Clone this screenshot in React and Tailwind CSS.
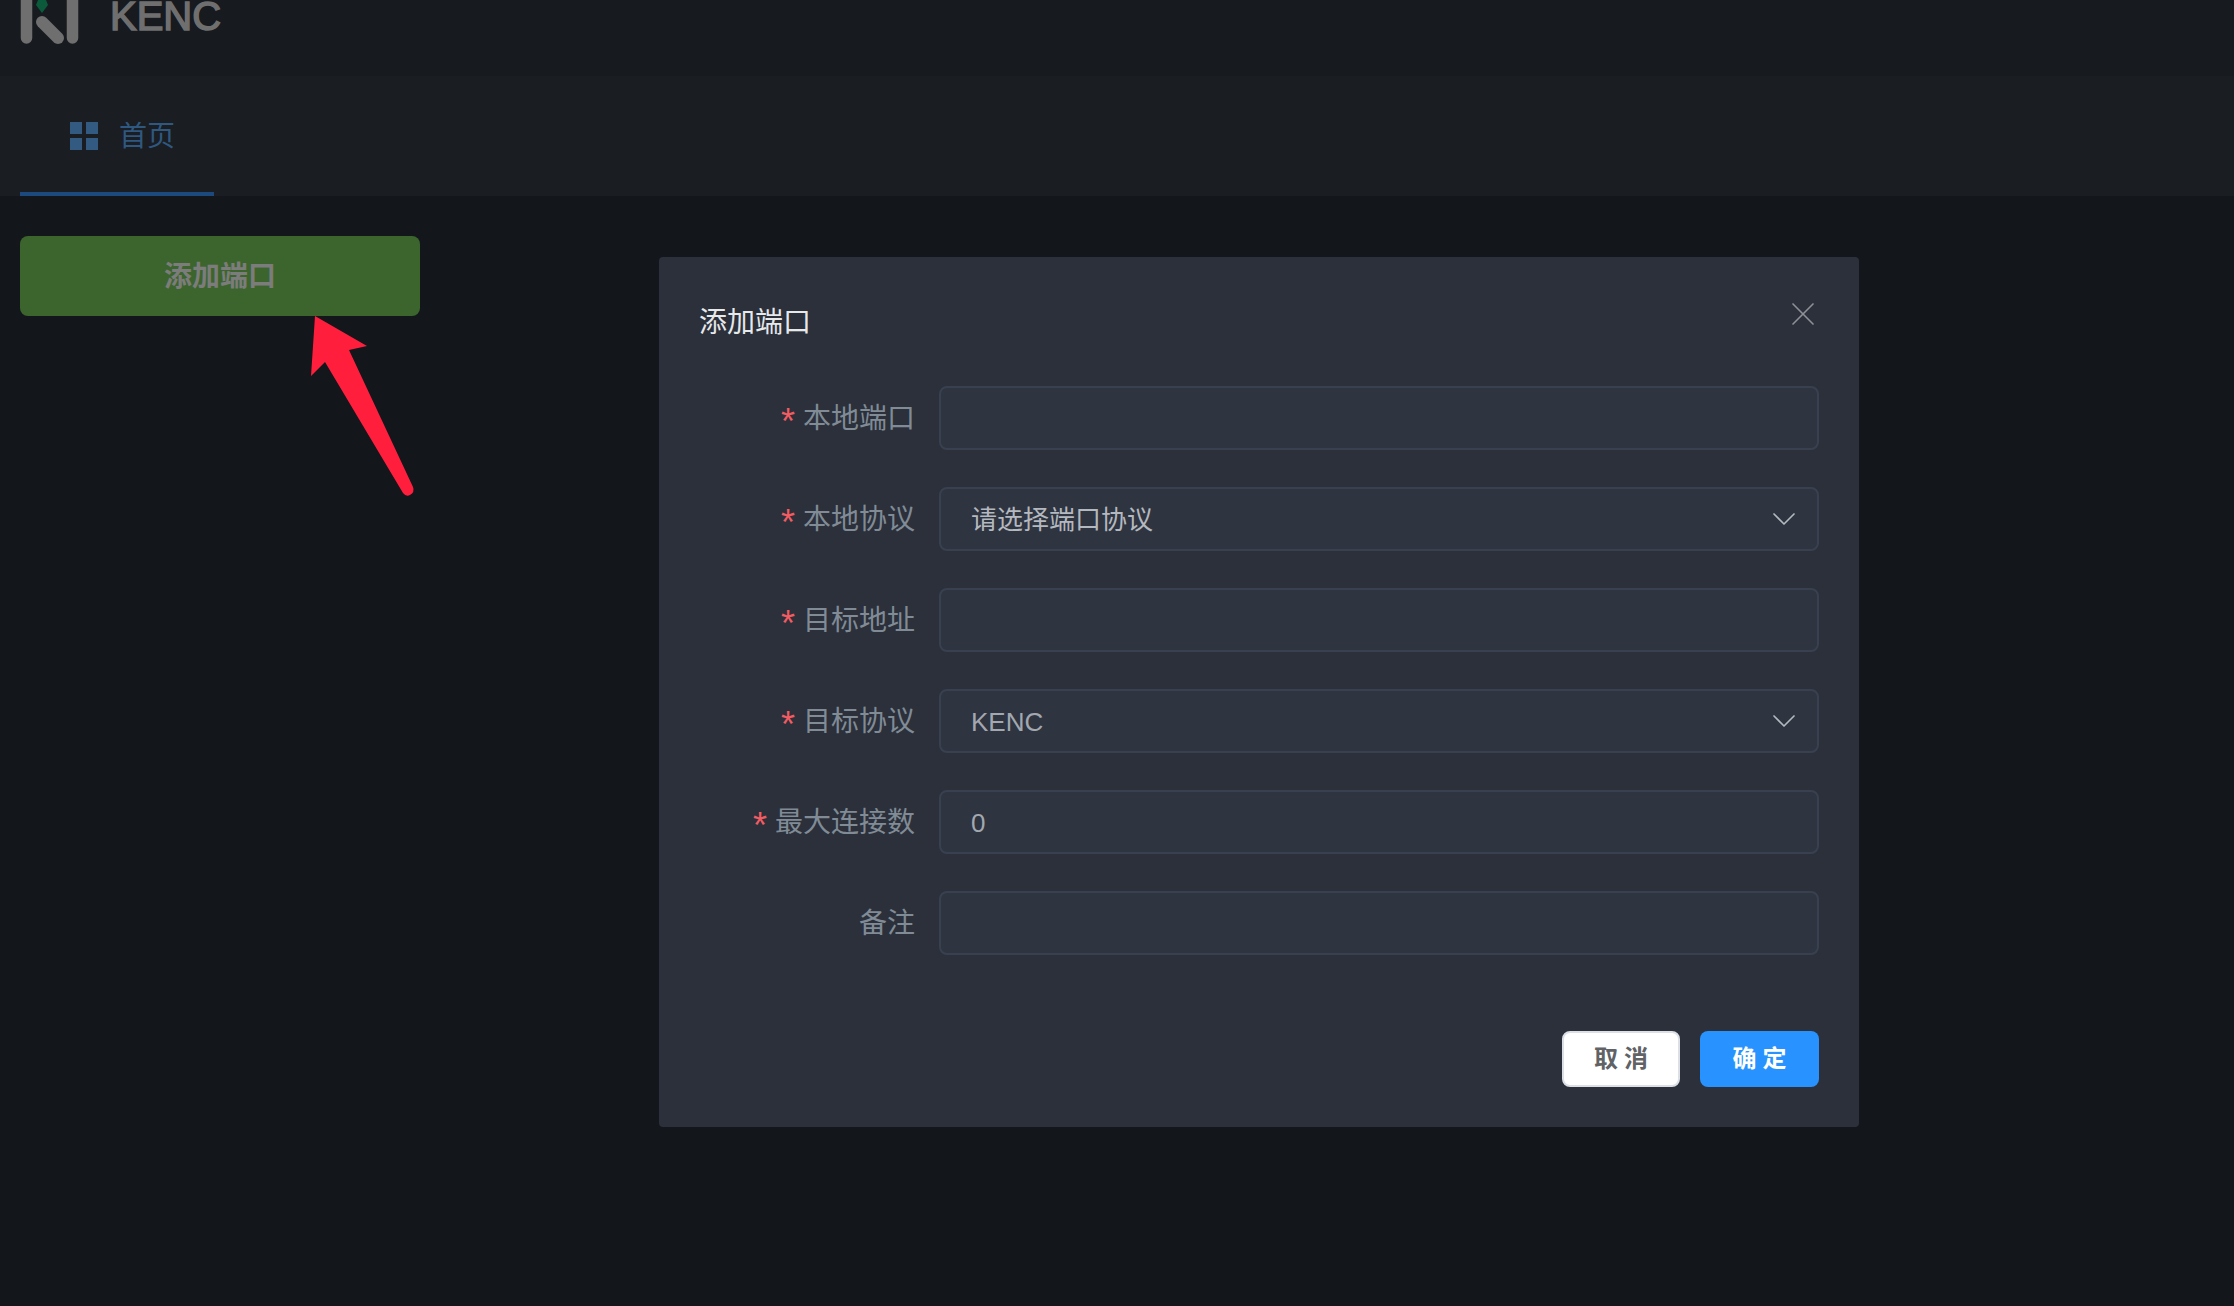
import { X, ChevronDown } from 'lucide-react'

const FONT = 'font-["Liberation_Sans","Noto_Sans_CJK_SC",sans-serif]'

const rows = [
  { label: '本地端口', required: true },
  { label: '本地协议', required: true, select: true, value: '请选择端口协议', light: true },
  { label: '目标地址', required: true },
  { label: '目标协议', required: true, select: true, value: 'KENC' },
  { label: '最大连接数', required: true, value: '0' },
  { label: '备注' },
]

function Logo() {
  return (
    <svg width="60" height="46" viewBox="0 0 60 46" className="shrink-0">
      <path d="M6.5 0V38" stroke="#6f6f6f" strokeWidth="11.5" strokeLinecap="round" />
      <path d="M52.5 0V38" stroke="#6f6f6f" strokeWidth="11.5" strokeLinecap="round" />
      <path d="M22 22L38 38" stroke="#6f6f6f" strokeWidth="12" strokeLinecap="round" />
      <path d="M18 0H26L28 5L22 13L16 5Z" fill="#0b5a3c" />
    </svg>
  )
}

function Row({ label, required, select, value, light }) {
  return (
    <div className="flex h-16 items-center">
      <label className="flex w-[240px] shrink-0 items-center justify-end pr-[24px] pt-[2px] text-[28px] leading-none text-[#808b96]">
        {required && <span className="mr-[8px] mt-[6px] text-[36px] leading-none text-[#f25c62]">*</span>}
        {label}
      </label>
      <div className="flex h-16 flex-1 items-center justify-between rounded-lg border-2 border-[#394150] bg-[#2e3440] pl-[30px] pr-[13px]">
        <span className={`pt-[2px] text-[26px] ${light ? 'text-[#b4b8bf]' : 'text-[#a3a8b0]'}`}>{value}</span>
        {select && <ChevronDown size={40} strokeWidth={1} className="text-[#b4b8bf]" />}
      </div>
    </div>
  )
}

export default function App() {
  return (
    <div className={`relative h-[1306px] overflow-hidden bg-[#13161b] ${FONT}`}>
      <header className="flex h-[76px] items-start gap-[30px] overflow-hidden bg-[#171a1f] pl-5">
        <Logo />
        <span className="-mt-[7px] text-[40px] leading-[46px] text-[#6f6f6f] [-webkit-text-stroke:1.5px_#6f6f6f]">KENC</span>
      </header>

      <nav className="flex h-[120px] bg-[#1a1d22] pl-5">
        <div className="flex w-[194px] items-center gap-[21px] border-b-4 border-[#1c4a7e] pl-[50px] pt-[4px] text-[#2f5880]">
          <svg width="28" height="28" viewBox="0 0 28 28" fill="#335a80">
            <rect x="0" y="0" width="12" height="12" />
            <rect x="16" y="0" width="12" height="12" />
            <rect x="0" y="16" width="12" height="12" />
            <rect x="16" y="16" width="12" height="12" />
          </svg>
          <span className="pt-[2px] text-[28px] leading-none">首页</span>
        </div>
      </nav>

      <div className="pl-5 pt-10">
        <button className="h-20 w-[400px] rounded-lg bg-[#3c652d] pt-[2px] text-[28px] font-bold text-[#7c7c7c]">
          添加端口
        </button>
      </div>

      {/* arrow drawn on top of the page */}
      <svg className="absolute left-0 top-0" width="460" height="520" viewBox="0 0 460 520">
        <path d="M315 316L367 346L349 350L413 487Q415 492 410 495Q406 497 403 493L325 362L311 376Z" fill="#ff1f3d" />
      </svg>

      <div className="absolute left-[659px] top-[257px] flex h-[870px] w-[1200px] flex-col rounded bg-[#2b303b] p-10">
        <div className="flex h-[50px] items-center justify-between">
          <span className="pt-[2px] text-[28px] leading-none text-[#e6e8ea]">添加端口</span>
          <X size={40} strokeWidth={1} className="-mr-1 -mt-4 text-[#8d9096]" />
        </div>
        <div className="mt-[39px] flex flex-col gap-[37px]">
          {rows.map((row) => (
            <Row key={row.label} {...row} />
          ))}
        </div>
        <div className="mt-auto flex justify-end gap-5">
          <button className="h-14 w-[118px] rounded-lg border-2 border-[#dcdfe6] bg-white pl-[6px] text-[24px] font-bold tracking-[6px] text-[#606266]">
            取消
          </button>
          <button className="h-14 w-[119px] rounded-lg bg-[#2893ff] pl-[6px] text-[24px] font-bold tracking-[6px] text-white">
            确定
          </button>
        </div>
      </div>
    </div>
  )
}
